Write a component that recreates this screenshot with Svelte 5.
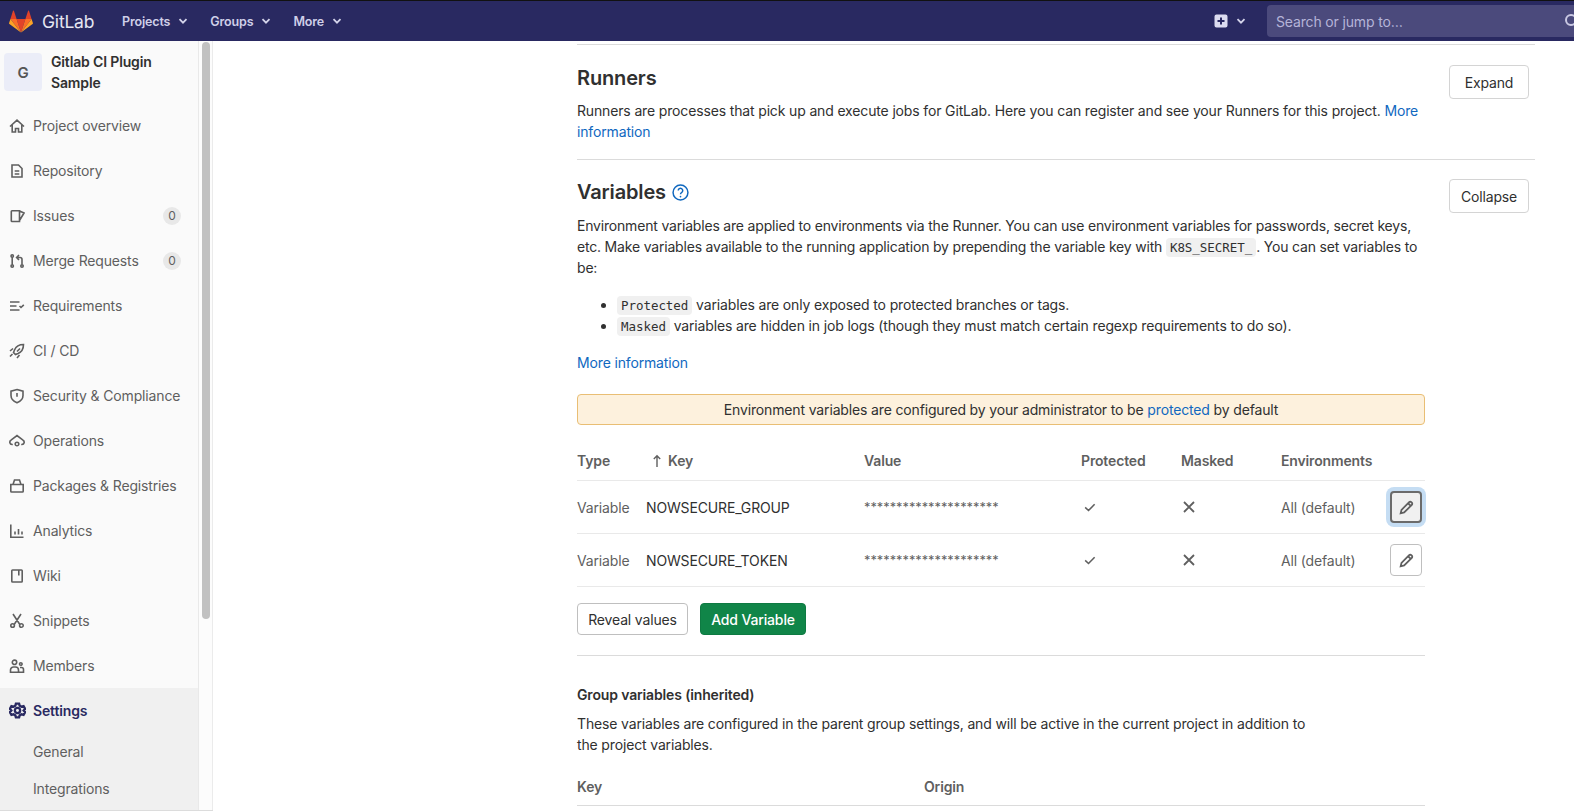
<script>
  const c = (x, y, r) => `M${x - r} ${y}a${r} ${r} 0 1 0 ${2 * r} 0a${r} ${r} 0 1 0 ${-2 * r} 0`;

  const navItems = [
    { label: "Project overview", d: "M1 8.500 8 2.200l7 6.300M3.200 7v7h3.300v-3.500h3V14h3.300V7" },
    { label: "Repository", d: "M3 2h6.500L13 5.500V14H3zM5.700 8h4.600M5.700 11h4.600" },
    { label: "Issues", d: "M10.500 2.700H3a.7.7 0 0 0-.7.7v9.400a.7.7 0 0 0 .7.7h7.500zM10.500 3 15 5l-4.500 7.500", badge: 0 },
    { label: "Merge Requests", d: c(3.200, 3, 1.200) + c(3.200, 13, 1.200) + "M3.200 4.500v7" + c(13, 13, 1.200) + "M13 11.500V6.500a2 2 0 0 0-2-2H8M10 2 7.600 4.500 10 7", badge: 0 },
    { label: "Requirements", d: "M1 4h9.500M1 8h6.500M1 12h9.500M10.500 8l1.500 1.500 2.800-2.700" },
    { label: "CI / CD", d: "M14.500 1.500C10 1.500 7 3.500 5.500 7L4.500 9.500l2 2L9 10.500c3.500-1.500 5.500-4.500 5.500-9zM4 5.500 1 8M10.500 12 8 15M3.500 11 1 13.500M8 8.500l3-3" },
    { label: "Security & Compliance", d: "M8 1.500 14 3.200v4.300c0 3.500-2.500 5.800-6 7.200-3.500-1.400-6-3.700-6-7.200V3.200zM8 5v3.800" },
    { label: "Operations", d: "M3.800 11.500H3a2.300 2.300 0 0 1-1-4.300L8 2.500l6 4.700a2.300 2.300 0 0 1-1 4.300h-.8" + c(8, 11, 1.800) },
    { label: "Packages & Registries", d: "M1.800 6.500h12.400v6.700a.8.8 0 0 1-.8.8H2.600a.8.8 0 0 1-.8-.8zM4 6.500 5.500 2h5L12 6.500" },
    { label: "Analytics", d: "M1.800 1.500v12.700h12.700M6 8.500v3M9.500 6v5.500M13 8.500v3" },
    { label: "Wiki", d: "M3.500 2h9a.7.7 0 0 1 .7.7v10.600a.7.7 0 0 1-.7.7h-9a.7.7 0 0 1-.7-.7V2.700a.7.7 0 0 1 .7-.7zM9.800 2v5.500" },
    { label: "Snippets", d: "M4 1 10.500 11M12 1 5.500 11" + c(3.600, 12.500, 1.800) + c(12.400, 12.500, 1.800) },
    { label: "Members", d: c(5.500, 4.300, 2.200) + "M1.500 14.200V12a3 3 0 0 1 3-3h2a3 3 0 0 1 3 3v2.200zM9.500 14.200h5V11.500a2 2 0 0 0-2-2H11" + c(11.800, 6, 1.300) },
  ];

  const subItems = ["General", "Integrations"];

  const variables = [
    { key: "NOWSECURE_GROUP", focused: true },
    { key: "NOWSECURE_TOKEN", focused: false },
  ];

  const pencil = "M2.500 13.500l.8-3.300 7.200-7.200a1.400 1.400 0 0 1 2 0l.5.5a1.400 1.400 0 0 1 0 2l-7.200 7.200zM9.500 4l2.500 2.500";
</script>

<div class="page">
  <header class="navbar">
    <div class="brand">
      <svg class="tanuki" viewBox="0 0 24 22" width="24" height="23">
        <path fill="#e24329" d="M12 22 16.400 8.500H7.600z" />
        <path fill="#fc6d26" d="M12 22 7.600 8.500H1.400z" />
        <path fill="#fca326" d="M1.400 8.500.1 12.600a.9.9 0 0 0 .33 1L12 22z" />
        <path fill="#e24329" d="M1.400 8.500h6.200L4.900.3a.46.46 0 0 0-.88 0z" />
        <path fill="#fc6d26" d="M12 22 16.400 8.500h6.200z" />
        <path fill="#fca326" d="M22.600 8.500l1.300 4.100a.9.9 0 0 1-.33 1L12 22z" />
        <path fill="#e24329" d="M22.600 8.500h-6.200L19.100.3a.46.46 0 0 1 .88 0z" />
      </svg>
      <span class="wordmark">GitLab</span>
    </div>
    <nav class="top-links">
      {#each ["Projects", "Groups", "More"] as link}
        <span class="top-link">
          {link}
          <svg class="chevron" viewBox="0 0 10 10" width="10" height="10"><path d="M1.500 3.200 5 6.700l3.500-3.500" /></svg>
        </span>
      {/each}
    </nav>
    <div class="new-menu">
      <svg viewBox="0 0 14 14" width="14" height="14">
        <path fill="#dcdcf0" fill-rule="evenodd" d="M2.500.5h9a2 2 0 0 1 2 2v9a2 2 0 0 1-2 2h-9a2 2 0 0 1-2-2v-9a2 2 0 0 1 2-2zM6 3.500V6H3.500v2H6v2.500h2V8h2.500V6H8V3.500z" />
      </svg>
      <svg class="chevron" viewBox="0 0 10 10" width="10" height="10"><path d="M1.500 3.200 5 6.700l3.500-3.500" /></svg>
    </div>
    <div class="search">
      <span>Search or jump to…</span>
      <svg viewBox="0 0 16 16" width="16" height="16"><path d="M11 11l4 4" /><circle cx="7" cy="7" r="5" /></svg>
    </div>
  </header>

  <div class="layout">
    <aside class="sidebar">
      <div class="sidebar-inner">
        <div class="context">
          <div class="avatar">G</div>
          <div class="project-name">Gitlab CI Plugin Sample</div>
        </div>
        {#each navItems as item}
          <div class="nav-item">
            <svg class="nav-icon" viewBox="0 0 16 16" width="16" height="16"><path d={item.d} /></svg>
            <span class="nav-label">{item.label}</span>
            {#if item.badge !== undefined}
              <span class="badge">{item.badge}</span>
            {/if}
          </div>
        {/each}
        <div class="nav-active">
          <div class="nav-item active">
            <svg class="nav-icon gear" viewBox="0 0 16 16" width="17" height="17">
              <path d="M6.500 1.500h3l.5 1.900 1.800 1 1.900-.5 1.500 2.600-1.400 1.500 1.400 1.500-1.500 2.600-1.900-.5-1.800 1-.5 1.900h-3l-.5-1.900-1.800-1-1.900.5L.8 9.500 2.200 8 .8 6.500l1.500-2.600 1.900.5 1.800-1z" />
              <circle cx="8" cy="8" r="2.500" />
            </svg>
            <span class="nav-label">Settings</span>
          </div>
          {#each subItems as sub}
            <div class="sub-item">{sub}</div>
          {/each}
        </div>
      </div>
      <div class="scroll-track"><div class="scroll-thumb"></div></div>
    </aside>

    <main class="content">
      <section class="settings runners">
        <div class="settings-text">
          <h4>Runners</h4>
          <p>Runners are processes that pick up and execute jobs for GitLab. Here you can register and see your Runners for this project. <a href="#runners">More information</a></p>
        </div>
        <button class="btn toggle">Expand</button>
      </section>

      <section class="settings">
        <div class="settings-text">
          <h4 class="vars-title">Variables
            <svg class="help" viewBox="0 0 16 16" width="17" height="17">
              <circle cx="8" cy="8" r="7" />
              <path d="M5.900 6.200a2.100 2.100 0 1 1 3.300 1.700c-.8.500-1.200.9-1.200 1.800" />
              <circle class="dot" cx="8" cy="11.800" r=".8" />
            </svg>
          </h4>
          <p class="intro">Environment variables are applied to environments via the Runner. You can use environment variables for passwords, secret keys, etc. Make variables available to the running application by prepending the variable key with <code>K8S_SECRET_</code>. You can set variables to be:</p>
          <ul>
            <li><code>Protected</code> variables are only exposed to protected branches or tags.</li>
            <li><code>Masked</code> variables are hidden in job logs (though they must match certain regexp requirements to do so).</li>
          </ul>
          <p class="more"><a href="#variables">More information</a></p>

          <div class="alert">Environment variables are configured by your administrator to be <a href="#protected">protected</a> by default</div>

          <div class="ci-table">
            <div class="ci-row head">
              <span>Type</span>
              <span class="key-head"><svg viewBox="0 0 10 14" width="10" height="14"><path d="M5 13V2M1.800 5 5 1.800 8.200 5" /></svg>Key</span>
              <span>Value</span>
              <span>Protected</span>
              <span>Masked</span>
              <span>Environments</span>
              <span></span>
            </div>
            {#each variables as v}
              <div class="ci-row">
                <span class="muted">Variable</span>
                <span class="var-key">{v.key}</span>
                <span class="stars">*********************</span>
                <span><svg class="mark" viewBox="0 0 16 16" width="14" height="14"><path d="M2.500 8.500 6.300 12l7-7.200" /></svg></span>
                <span><svg class="mark cross" viewBox="0 0 16 16" width="16" height="16"><path d="M3 3l10 10M13 3 3 13" /></svg></span>
                <span class="muted">All (default)</span>
                <span class="edit-cell">
                  <button class="btn edit" class:focused={v.focused} aria-label="Edit">
                    <svg viewBox="0 0 16 16" width="17" height="17"><path d={pencil} /></svg>
                  </button>
                </span>
              </div>
            {/each}
          </div>

          <div class="actions">
            <button class="btn reveal">Reveal values</button>
            <button class="btn add">Add Variable</button>
          </div>

          <div class="inherited">
            <h5>Group variables (inherited)</h5>
            <p class="inherited-copy">These variables are configured in the parent group settings, and will be active in the current project in addition to the project variables.</p>
            <div class="origin-head">
              <span>Key</span>
              <span>Origin</span>
            </div>
          </div>
        </div>
        <button class="btn toggle">Collapse</button>
      </section>
    </main>
  </div>
</div>

<style>
  :global(body) {
    margin: 0;
    background: #fff;
    overflow: hidden;
  }

  .page {
    height: 812px;
    overflow: hidden;
    font-family: Inter, "Noto Sans", sans-serif;
    font-size: 14px;
    letter-spacing: -0.15px;
    line-height: 21px;
    color: #303030;
  }

  /* top bar */
  .navbar {
    height: 40px;
    background: #292961;
    border-top: 1px solid #111;
    display: flex;
    align-items: center;
    overflow: hidden;
  }

  .brand {
    display: flex;
    align-items: center;
    padding-left: 9px;
    width: 113px;
    flex: none;
  }

  .tanuki {
    flex: none;
  }

  .wordmark {
    margin-left: 9px;
    font-size: 17.500px;
    letter-spacing: -0.2px;
    color: #e6e6f2;
  }

  .top-links {
    display: flex;
    gap: 22px;
    flex: 1;
  }

  .top-link {
    font-size: 12.500px;
    font-weight: 600;
    color: #cfcfe8;
    display: flex;
    align-items: center;
    gap: 8px;
  }

  .chevron path {
    fill: none;
    stroke: #d4d4ea;
    stroke-width: 1.800;
  }

  .new-menu {
    display: flex;
    align-items: center;
    gap: 8px;
    margin-right: 21px;
  }

  .search {
    width: 307px;
    height: 32px;
    box-sizing: border-box;
    background: #4b4a7c;
    border-radius: 4px 0 0 4px;
    padding: 0 0 0 9px;
    color: #b5b4d8;
    display: flex;
    align-items: center;
    justify-content: space-between;
  }

  .search svg {
    margin-right: -6px;
    fill: none;
    stroke: #c9c8e2;
    stroke-width: 2;
  }

  /* sidebar */
  .layout {
    display: flex;
    height: 771px;
  }

  .sidebar {
    width: 213px;
    flex: none;
    display: flex;
    height: 770px;
    border-bottom: 1px solid #dcdcdc;
    box-sizing: border-box;
  }

  .sidebar-inner {
    width: 199px;
    box-sizing: border-box;
    background: #fafafa;
    border-right: 1px solid #e9e9e9;
    overflow: hidden;
    flex: none;
  }

  .context {
    display: flex;
    gap: 9px;
    padding: 12px 0 12px 4px;
    height: 38px;
    align-items: center;
    box-sizing: content-box;
  }

  .avatar {
    width: 38px;
    height: 38px;
    flex: none;
    border-radius: 4px;
    background: #ebedf8;
    color: #555;
    font-size: 15px;
    font-weight: 600;
    display: flex;
    align-items: center;
    justify-content: center;
  }

  .project-name {
    font-weight: 600;
    width: 120px;
    color: #303030;
  }

  .nav-item {
    height: 45px;
    display: flex;
    align-items: center;
    color: #5f5f5f;
    padding-left: 9px;
    padding-right: 18px;
  }

  .nav-icon {
    flex: none;
    fill: none;
    stroke: #5f5f5f;
    stroke-width: 1.600;
    margin-right: 8px;
  }

  .nav-label {
    flex: 1;
    white-space: nowrap;
  }

  .badge {
    width: 18px;
    height: 18px;
    border-radius: 50%;
    background: #e8e8e8;
    font-size: 12px;
    line-height: 18px;
    text-align: center;
    margin-right: -1px;
  }

  .nav-active {
    background: #f0f0f0;
    height: 123px;
  }

  .nav-item.active {
    font-weight: 600;
    color: #292961;
  }

  .gear {
    stroke: #292961;
    stroke-width: 2.200;
    margin-right: 7px;
  }

  .sub-item {
    height: 37px;
    line-height: 37px;
    padding-left: 33px;
    color: #5f5f5f;
  }

  .scroll-track {
    width: 14px;
    box-sizing: border-box;
    background: #fcfcfc;
    border-right: 1px solid #ebebeb;
    padding: 1px 2px 0 3px;
  }

  .scroll-thumb {
    height: 577px;
    background: #c1c1c1;
    border-radius: 4px;
  }

  /* main column */
  .content {
    padding: 3px 0 0 364px;
    width: 958px;
    flex: none;
  }

  .settings {
    display: flex;
    justify-content: space-between;
    align-items: flex-start;
    border-top: 1px solid #dbdbdb;
    padding: 18px 6px 16px 0;
  }

  .runners {
    padding-top: 19px;
    padding-bottom: 17px;
  }

  .settings-text {
    width: 848px;
    flex: none;
  }

  .toggle {
    width: 80px;
    height: 34px;
    margin-top: 1px;
  }

  h4 {
    margin: 0 0 8px;
    font-size: 20px;
    line-height: 28px;
    font-weight: 600;
    letter-spacing: -0.15px;
    display: flex;
    align-items: center;
    gap: 6px;
  }

  .vars-title {
    margin-bottom: 9px;
  }

  p {
    margin: 0;
  }

  .intro {
    letter-spacing: -0.19px;
  }

  a {
    color: #1068bf;
    text-decoration: none;
  }

  .help {
    fill: none;
    stroke: #1068bf;
    stroke-width: 1.400;
  }

  .help .dot {
    fill: #1068bf;
    stroke: none;
  }

  code {
    font-family: "DejaVu Sans Mono", "Liberation Mono", monospace;
    font-size: 12.500px;
    line-height: 16px;
    letter-spacing: -0.05px;
    background: #f0f0f0;
    border-radius: 4px;
    padding: 2px 4px;
  }

  ul {
    margin: 16px 0;
    padding-left: 40px;
  }

  .alert {
    margin-top: 21px;
    height: 31px;
    box-sizing: border-box;
    background: #fdf1dd;
    border: 1px solid #e9be74;
    border-radius: 4px;
    text-align: center;
    line-height: 29px;
  }

  .ci-row {
    display: grid;
    grid-template-columns: 69px 218px 217px 100px 100px 108px 36px;
    align-items: center;
    height: 53px;
    box-sizing: border-box;
    border-bottom: 1px solid #e9e9e9;
  }

  .ci-row.head {
    height: 56px;
    padding-top: 16px;
    font-weight: 600;
    color: #5f5f5f;
  }

  .key-head {
    display: flex;
    align-items: center;
    gap: 6px;
    padding-left: 6px;
  }

  .key-head svg {
    fill: none;
    stroke: #5f5f5f;
    stroke-width: 1.400;
  }

  .muted {
    color: #5f5f5f;
  }

  .var-key {
    color: #303030;
  }

  .stars {
    color: #5f5f5f;
    font-size: 12.800px;
    letter-spacing: 0;
  }

  .mark {
    fill: none;
    stroke: #5f5f5f;
    stroke-width: 1.800;
    display: block;
    margin-left: 2px;
  }

  .cross {
    margin-left: 0;
  }

  .edit-cell {
    display: flex;
    justify-content: flex-end;
    padding-right: 3px;
  }

  .btn {
    font: inherit;
    letter-spacing: inherit;
    color: #303030;
    background: #fff;
    border: 1px solid #d4d4d4;
    border-radius: 4px;
    padding: 0;
    box-sizing: border-box;
  }

  .edit {
    width: 32px;
    height: 32px;
    display: flex;
    align-items: center;
    justify-content: center;
    border-color: #bfbfbf;
  }

  .edit svg {
    fill: none;
    stroke: #5f5f5f;
    stroke-width: 1.700;
  }

  .edit.focused {
    background: #f0f0f0;
    border: 2px solid #6b6b6b;
    box-shadow: 0 0 0 4px #c5ddf3;
  }

  .actions {
    display: flex;
    gap: 12px;
    padding: 16px 0 20px;
    border-bottom: 1px solid #dbdbdb;
  }

  .reveal {
    width: 111px;
    height: 32px;
    border-color: #bfbfbf;
  }

  .add {
    width: 106px;
    height: 32px;
    background: #108548;
    border-color: #0e7a42;
    color: #fff;
    font-weight: 500;
  }

  .inherited {
    padding-top: 28px;
  }

  h5 {
    margin: 0 0 8px;
    font-size: 14px;
    line-height: 21px;
    font-weight: 600;
  }

  .inherited-copy {
    width: 740px;
  }

  .origin-head {
    display: grid;
    grid-template-columns: 347px 1fr;
    height: 47px;
    align-items: center;
    padding-top: 8px;
    box-sizing: border-box;
    margin-top: 4px;
    font-weight: 600;
    color: #5f5f5f;
    border-bottom: 1px solid #dbdbdb;
  }
</style>
